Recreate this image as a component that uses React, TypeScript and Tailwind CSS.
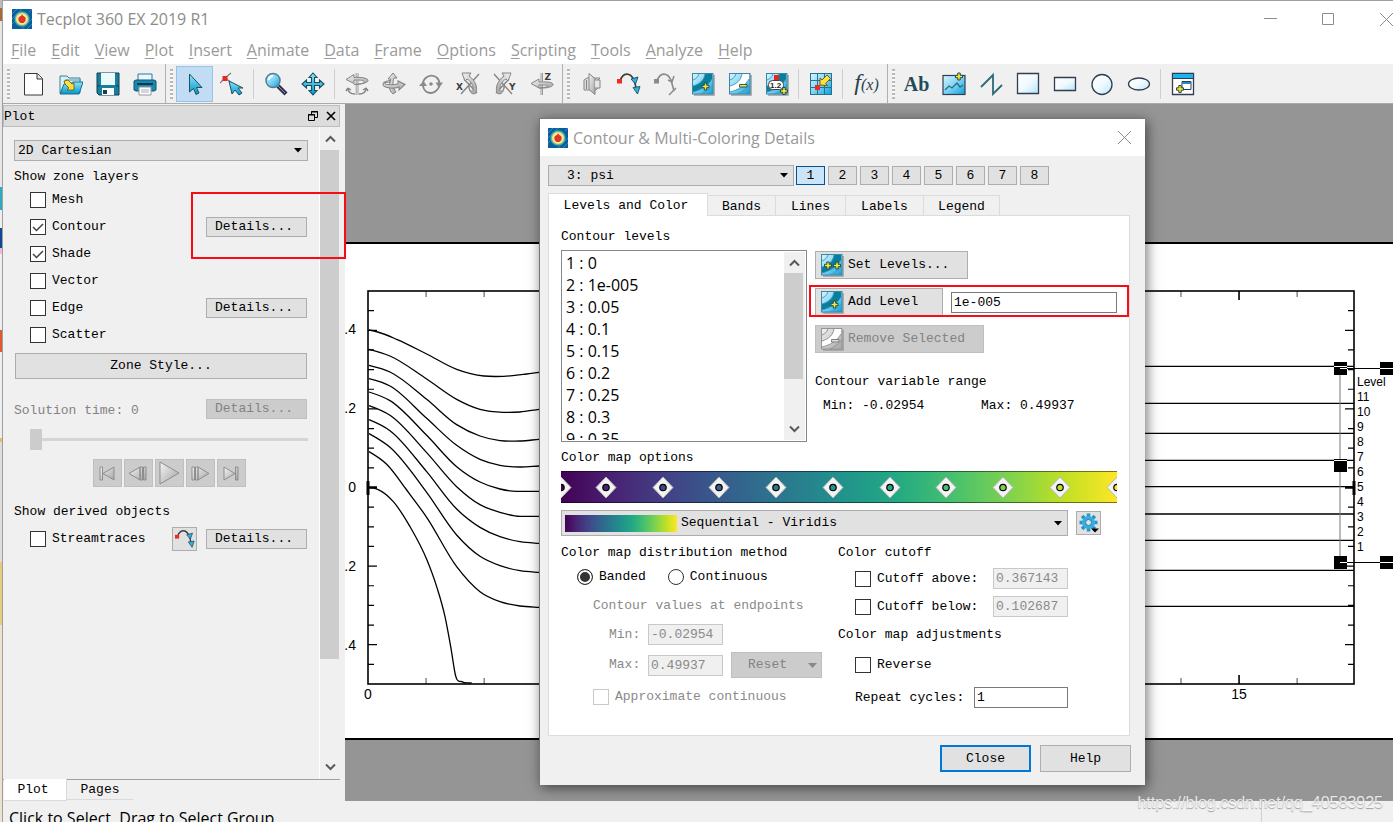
import React, { useId, useState } from "react";

type Pt = [number, number];

/* ---------- icons ---------- */

function Svg({ size = 24, children }: { size?: number; children: React.ReactNode }) {
  return (
    <svg width={size} height={size} viewBox="0 0 24 24" fill="none" aria-hidden="true" className="shrink-0">
      {children}
    </svg>
  );
}

function Defs() {
  return (
    <svg width="0" height="0" className="absolute" aria-hidden="true">
      <defs>
        <linearGradient id="cyan" x1="0" y1="0" x2="1" y2="1">
          <stop offset="0" stopColor="#d9f5ff" />
          <stop offset="0.5" stopColor="#7fd3f5" />
          <stop offset="1" stopColor="#0a9fd8" />
        </linearGradient>
        <linearGradient id="pale" x1="0" y1="0" x2="1" y2="1">
          <stop offset="0" stopColor="#ffffff" />
          <stop offset="0.5" stopColor="#f1faff" />
          <stop offset="1" stopColor="#b4e6fa" />
        </linearGradient>
        <linearGradient id="teal" x1="0" y1="0" x2="0" y2="1">
          <stop offset="0" stopColor="#8fe6fb" />
          <stop offset="1" stopColor="#0096c8" />
        </linearGradient>
        <linearGradient id="metal" x1="0" y1="0" x2="1" y2="1">
          <stop offset="0" stopColor="#f4f4f4" />
          <stop offset="1" stopColor="#a4a4a4" />
        </linearGradient>
        <radialGradient id="logo">
          <stop offset="0" stopColor="#d8261c" />
          <stop offset="0.38" stopColor="#ee5a2c" />
          <stop offset="0.48" stopColor="#fff6b0" />
          <stop offset="0.68" stopColor="#f3e27a" />
          <stop offset="0.82" stopColor="#57bda0" />
          <stop offset="1" stopColor="#1173b0" />
        </radialGradient>
      </defs>
    </svg>
  );
}

const Plus = ({ x, y }: { x: number; y: number }) => (
  <path d={`M${x - 1.2} ${y - 3.5}h2.400v2.300h2.300v2.400h-2.300v2.300h-2.400v-2.300h-2.300v-2.400h2.300z`} fill="#ffe826" stroke="#1d4c55" strokeWidth="1" />
);

const Logo = () => (
  <svg width="20" height="20" viewBox="0 0 20 20" aria-hidden="true">
    <rect width="20" height="20" fill="#0d5c9c" />
    <path d="M0 5l5-5M0 10l10-10M10 20l10-10M15 20l5-5M0 15l3-3M17 3l3-3" stroke="#2d8dc8" />
    <circle cx="10" cy="10" r="8" fill="url(#logo)" />
    <path d="M10 5l1.500 2.500 2 1V12l-2 2h-3l-2-2V8.500l2.500-1z" fill="#e0352a" />
  </svg>
);

const NewIcon = () => (
  <Svg><path d="M2.500 1.500h13l5 5V23h-18z" fill="#fff" stroke="#383838" /><path d="M15 1.500v5.500h5.500" fill="#e4e4e4" stroke="#383838" /></Svg>
);
const OpenIcon = () => (
  <Svg>
    <path d="M1 4h7l2 2h11v15H1z" fill="#d5f2f8" stroke="#3a7f90" />
    <path d="M6 8h16" stroke="#4d98a8" />
    <path d="M1 22L5 12h6l3-2h10l-4 12z" fill="url(#teal)" stroke="#146d90" />
    <path d="M5 9l4-1 4 4 2-1v7H8l2-2-4-4z" fill="#ffdf3d" stroke="#5e5115" strokeWidth=".8" />
  </Svg>
);
const SaveIcon = () => (
  <Svg>
    <path d="M1 1h22v22H3l-2-2z" fill="#167f9c" stroke="#0d3f50" />
    <path d="M5 1h14v12H5z" fill="#ecf9fc" />
    <path d="M6 16h12v7H6z" fill="#fff" /><path d="M7 18h4v4H7z" fill="#12414f" />
    <path d="M1 14h3M20 14h3" stroke="#0d3f50" />
  </Svg>
);
const PrintIcon = () => (
  <Svg>
    <path d="M5 2h14v8H5z" fill="#e8f7fd" stroke="#2b7c98" />
    <path d="M1 9l2-1h18l2 1v9l-2 1H3l-2-1z" fill="#1d86ad" stroke="#0c5877" />
    <path d="M4 12h16" stroke="#083a50" strokeWidth="2" />
    <path d="M6 15h12v8H6z" fill="#fff" stroke="#8c9aa0" />
    <path d="M8 18h8M8 20h8" stroke="#aab" />
  </Svg>
);
const ArrowIcon = () => (
  <Svg><path d="M6.500 2v18l4-3.500 2.500 6 3-1.500-2.500-5.500h5.500z" fill="url(#teal)" stroke="#205060" strokeLinejoin="round" /></Svg>
);
const AdjustIcon = () => (
  <Svg>
    <path d="M0 11l5-5M5 6l6-5M5 6l7 5" stroke="#6a7d80" strokeWidth="1.100" />
    <path d="M2.500 4h5v5h-5z" fill="#e8281e" />
    <path d="M9 9l3 13 3-4 4 5 3-2-4-5h5z" fill="url(#teal)" stroke="#205060" strokeLinejoin="round" />
  </Svg>
);
const ZoomIcon = () => (
  <Svg>
    <path d="M14 14l8 8" stroke="#31324f" strokeWidth="4.500" />
    <path d="M14 14l7 7" stroke="#8f8fa8" strokeWidth="1" />
    <circle cx="9" cy="8.500" r="7" fill="url(#cyan)" stroke="#4f7f92" strokeWidth="1.500" />
    <path d="M5 8a4 4 0 014-4" stroke="#fff" strokeWidth="2" />
  </Svg>
);
const MoveIcon = () => (
  <Svg>
    <path d="M12 1l4 4.500h-2.500v5h5V8L23 12l-4.500 4v-2.500h-5v5H16L12 23l-4-4.500h2.500v-5h-5V16L1 12l4.500-4v2.500h5v-5H8z" fill="url(#teal)" stroke="#164f60" strokeWidth="1.100" />
  </Svg>
);

function RotateIcon({ kind }: { kind: "ball" | "tilt" | "twist" | "x" | "y" | "z" }) {
  const s = { stroke: "#858585", strokeWidth: 1.4 };
  const letter = "fill-[#3c3c3c] font-['DejaVu_Sans'] text-[9px] font-bold";
  if (kind === "ball")
    return (
      <Svg>
        <path d="M11.200 1v22M13 1v22" {...s} strokeWidth=".8" />
        <path d="M1 7.500l8-5v3c7-.5 13 .5 14 2.500s-5 4.500-14 4.500c7-.5 11-1.500 10-3s-5-1.500-10-1.500v3.500z" fill="url(#metal)" {...s} strokeWidth="1" />
        <path d="M3 16c0 4 3 6 7 6M3 16l-2 3M3 16l3 2M21 16c0 4-3 6-7 6M21 16l2 3M21 16l-3 2" {...s} />
      </Svg>
    );
  if (kind === "tilt")
    return (
      <Svg>
        <path d="M11 22c-4-3-5-9-2-15H6l5-6 4 5h-3c-2 5-1 10 2 14z" fill="url(#metal)" {...s} strokeWidth="1" />
        <path d="M8 8.500C3 9 0 11 1.500 13.500S13 17 17 15v3l6-5.500L16 9v3c-5 1-13 1-13-.5 0-1 3-1.500 5-1.500z" fill="url(#metal)" {...s} strokeWidth="1.100" />
      </Svg>
    );
  if (kind === "twist")
    return (
      <Svg>
        <path d="M4 13A8.500 8.500 0 0117 5M20 11A8.500 8.500 0 017 19.500" {...s} strokeWidth="1.800" />
        <path d="M17 5a8.500 8.500 0 013.500 6M7 19.500A8.500 8.500 0 014 14" {...s} strokeWidth="1.800" />
        <path d="M0 14l4.500-5L8 14zM16.500 10.500H24L20 16z" fill="#8a8a8a" />
        <circle cx="12" cy="12" r="1.800" fill="#8a8a8a" />
      </Svg>
    );
  if (kind === "z")
    return (
      <Svg>
        <path d="M11 1v22M12.500 1v22" {...s} strokeWidth=".8" />
        <path d="M1 11.500L9 7v3c6-.5 13 0 14 2s-4 4.500-14 4c8-.5 10-2 9-2.500s-5-.5-9-.5v3z" fill="url(#metal)" {...s} strokeWidth="1" />
        <text x="14.500" y="8" className={letter}>Z</text>
      </Svg>
    );
  const right = kind === "y";
  return (
    <Svg>
      <path d="M23 2L5 22M8 7l13 14" {...s} transform={right ? "translate(24 0) scale(-1 1)" : undefined} />
      <g transform={right ? "translate(24 0) scale(-1 1)" : undefined}>
        <path d="M6 1h9l-2 3c6 4 9 11 7 17-4 3-8-2-7-9-1 5 2 8 4 7 1-5-2-10-6-12l-2 2z" fill="url(#metal)" {...s} strokeWidth="1" />
      </g>
      <text x={right ? 16 : 0} y="18" className={letter}>{right ? "Y" : "X"}</text>
    </Svg>
  );
}

const SliceIcon = () => (
  <Svg>
    <path d="M4 8l3-2h13l-2 2v8l-2 2H4z" fill="#dcdcdc" stroke="#858585" />
    <path d="M9 1.500l6 5v16l-6-5z" fill="url(#metal)" stroke="#858585" />
    <path d="M15 8h5v8h-5" fill="#e6e6e6" stroke="#858585" />
    <path d="M6.500 8v9" stroke="#858585" />
  </Svg>
);
function StreamIcon({ gray = false, size = 24 }: { gray?: boolean; size?: number }) {
  return (
    <Svg size={size}>
      <path d="M3 9C6 0 13 0 17 8l3 11" stroke={gray ? "#8b8b8b" : "#3e3e3e"} strokeWidth="1.600" />
      <path d="M0 7h5v4.500H0z" fill={gray ? "#8b8b8b" : "#ee2c22"} />
      {gray ? (
        <path d="M14 8l4 2 2-6M15 23l7-7" stroke="#8b8b8b" strokeWidth="1.500" />
      ) : (
        <path d="M14 7l7-2-2.500 7zM16 15.500l7-1-2.500 7.500z" fill="#2bb2e6" stroke="#214a59" strokeWidth=".9" />
      )}
    </Svg>
  );
}

function ContourIcon({ mark, gray = false }: { mark: "plus" | "plus2" | "minus" | "label"; gray?: boolean }) {
  const line = gray ? "#8e8e8e" : "#4394b5";
  const band = mark === "minus" ? "#ffffff" : "#057f9d";
  return (
    <Svg>
      <path d="M3 23h20V3" stroke="#9a9a9a" strokeWidth="1.500" />
      <rect x="1.500" y="1.500" width="20.500" height="20.500" fill={gray ? "url(#metal)" : "url(#cyan)"} stroke={gray ? "#959595" : "#3c87a6"} />
      <path d="M14 2h7v5C17 14 10 18 2 20v-6C9 12 13 8 14 2z" fill={band} />
      <path d="M14 2C13 8 9 12 2 14M8 2C7 5 5 7 2 8M21 7C17 14 10 18 2 20M22 13c-3 4-7 7-12 9" stroke={line} strokeWidth=".9" />
      {mark === "plus" && <Plus x={14.5} y={14.5} />}
      {mark === "plus2" && (<><Plus x={8} y={12.5} /><Plus x={17} y={12.5} /></>)}
      {mark === "minus" && <path d="M11.500 12.500h7.500v2.500h-7.500z" fill={gray ? "#ddd" : "#ffe826"} stroke={gray ? "#777" : "#1d4c55"} strokeWidth=".9" />}
      {mark === "label" && (
        <>
          <path d="M9 3h5v5H9z" fill="#e0281c" />
          <rect x="3.500" y="8.500" width="15" height="9" rx="4" fill="#fff" stroke="#37474f" />
          <text x="5" y="16" className="fill-[#222] font-['Liberation_Sans'] text-[8px] font-bold">1.2</text>
          <Plus x={19} y={19} />
        </>
      )}
    </Svg>
  );
}
const ProbeIcon = () => (
  <Svg>
    <rect x="1.500" y="1.500" width="21" height="21" fill="url(#cyan)" stroke="#24728f" />
    <path d="M8.500 2v20M15.500 2v20M2 8.500h20M2 15.500h20" stroke="#24728f" />
    <path d="M6 13h5v5H6z" fill="#ee2c22" />
    <path d="M11 13V6l2 2 5-5 3.500 3.500-5 5 2 2z" fill="#ffe23a" stroke="#5e5115" strokeWidth=".9" />
  </Svg>
);
const PictureIcon = () => (
  <Svg>
    <rect x="1" y="3.500" width="22" height="19" fill="url(#cyan)" stroke="#343c50" strokeWidth="1.200" />
    <path d="M3 18l4-4 3 2 5-5 3 4 3-2" stroke="#2c6d83" strokeWidth="1.300" />
    <Plus x={17} y={4.5} />
  </Svg>
);
const PolylineIcon = () => (
  <Svg><path d="M2 15L14 3v19l9-9" stroke="#2b6a78" strokeWidth="1.800" /></Svg>
);
const GeomIcon = ({ kind }: { kind: "square" | "rect" | "circle" | "ellipse" }) => (
  <Svg>
    {kind === "square" && <path d="M1.500 1.500h21v20h-21z" fill="url(#pale)" stroke="#343c50" strokeWidth="1.300" />}
    {kind === "rect" && <path d="M1.500 5.500h21v13h-21z" fill="url(#pale)" stroke="#343c50" strokeWidth="1.300" />}
    {kind === "circle" && <circle cx="12" cy="12.500" r="10" fill="url(#pale)" stroke="#343c50" strokeWidth="1.300" />}
    {kind === "ellipse" && <ellipse cx="12" cy="12" rx="10.500" ry="6" fill="url(#pale)" stroke="#343c50" strokeWidth="1.300" />}
  </Svg>
);
const FrameIcon = () => (
  <Svg>
    <path d="M1.500 1.500h21v21h-21z" fill="#fff" stroke="#343c50" strokeWidth="1.300" />
    <path d="M2 2h20v4H2z" fill="#1cb2ec" /><path d="M2 6.500h20" stroke="#343c50" />
    <path d="M11 9.500h9v8h-9z" fill="#fff" stroke="#343c50" /><path d="M11 10h9v2h-9z" fill="#1c8fc0" />
    <Plus x={9} y={17} />
  </Svg>
);

/* ---------- small controls ---------- */

const mono = "font-['Liberation_Mono',monospace] text-[13px] leading-4";
const ui = "font-['Open_Sans','Noto_Sans',sans-serif]";

function Check({ label, checked = false, disabled = false }: { label: string; checked?: boolean; disabled?: boolean }) {
  const [on, setOn] = useState(checked);
  return (
    <label className={`flex items-center gap-1.5 ${disabled ? "text-[#8a8a8a]" : ""}`}>
      <span className="grid">
        <input
          type="checkbox"
          checked={on}
          disabled={disabled}
          onChange={(e) => setOn(e.target.checked)}
          className="col-start-1 row-start-1 size-4 appearance-none border border-[#333] bg-white disabled:border-[#c8c8c8]"
        />
        {on && (
          <svg viewBox="0 0 16 16" className="pointer-events-none col-start-1 row-start-1 size-4" fill="none" stroke="#444" strokeWidth="1.500">
            <path d="M3 8l3.500 3.500L13 5" />
          </svg>
        )}
      </span>
      {label}
    </label>
  );
}

function Btn({ children, className = "", disabled = false }: { children: React.ReactNode; className?: string; disabled?: boolean }) {
  return (
    <button
      type="button"
      disabled={disabled}
      className={`flex items-center border border-[#adadad] bg-[#e1e1e1] disabled:border-[#bfbfbf] disabled:bg-[#cccccc] disabled:text-[#838383] ${className}`}
    >
      {children}
    </button>
  );
}

const Details = ({ disabled = false }: { disabled?: boolean }) => (
  <Btn disabled={disabled} className="h-5 w-[101px] pl-2">Details...</Btn>
);

function Select({ label, value, className = "", pad = "pl-[3px]" }: { label: string; value: string; className?: string; pad?: string }) {
  return (
    <span className={`grid items-center ${className}`}>
      <select aria-label={label} className={`col-start-1 row-start-1 h-full w-full appearance-none border border-[#adadad] bg-[#e1e1e1] ${pad}`}>
        <option>{value}</option>
      </select>
      <svg width="8" height="5" className="pointer-events-none col-start-1 row-start-1 mr-1.5 justify-self-end"><path d="M0 0h8L4 4.500z" /></svg>
    </span>
  );
}

function Field({ label, value, disabled = false, className }: { label: string; value: string; disabled?: boolean; className: string }) {
  return (
    <input
      aria-label={label}
      defaultValue={value}
      disabled={disabled}
      className={`h-[21px] border border-[#7a7a7a] bg-white px-0.5 disabled:border-[#c8c8c8] disabled:bg-[#f0f0f0] disabled:text-[#8a8a8a] ${className}`}
    />
  );
}

const Chevron = ({ down = false }: { down?: boolean }) => (
  <svg width="11" height="8" viewBox="0 0 11 8" fill="none" stroke="#5a5a5a" strokeWidth="2" aria-hidden="true">
    <path d={down ? "M1 1.500l4.500 4.500L10 1.500" : "M1 6.500L5.500 2 10 6.500"} />
  </svg>
);

/* ---------- top bars ---------- */

const menus = ["File", "Edit", "View", "Plot", "Insert", "Animate", "Data", "Frame", "Options", "Scripting", "Tools", "Analyze", "Help"];

function Tool({ label, children, active = false }: { label: string; children: React.ReactNode; active?: boolean }) {
  return (
    <button
      type="button"
      aria-label={label}
      className={`flex h-9 w-[37px] shrink-0 items-center justify-center ${active ? "border border-[#90c3f0] bg-[#c1dcf3]" : ""}`}
    >
      {children}
    </button>
  );
}
const Sep = () => <div className="mx-[3px] h-[30px] w-px shrink-0 bg-[#cfcfcf]" />;
const Grip = () => <div className="h-[30px] w-[3px] shrink-0 bg-[repeating-linear-gradient(to_bottom,#b8b8b8_0px,#b8b8b8_2px,#f8f8f8_2px,#f8f8f8_4px)]" />;
const Split = () => (
  <div className="flex w-[13px] shrink-0 items-center gap-1 self-stretch pl-0.5">
    <div className="w-px self-stretch bg-[#b0b0b0]" />
    <Grip />
  </div>
);

function TopBars() {
  return (
    <header className={`shrink-0 bg-white ${ui}`}>
      <div className="flex h-9 items-center pl-[9px] text-[#8c8c8c]">
        <Logo />
        <h1 className="ml-[5px] flex-1 text-[16px]">Tecplot 360 EX 2019 R1</h1>
        <div className="flex gap-[45px]">
          <button type="button" aria-label="Minimize"><svg width="13" height="13"><path d="M0 5.500h13" stroke="#8c8c8c" /></svg></button>
          <button type="button" aria-label="Maximize"><svg width="13" height="13"><path d="M.5.500h11v11H.500z" fill="none" stroke="#8c8c8c" /></svg></button>
          <button type="button" aria-label="Close window"><svg width="13" height="13"><path d="M0 0l13 13M13 0L0 13" stroke="#8c8c8c" /></svg></button>
        </div>
      </div>
      <nav className="flex h-[27px] gap-[15px] pl-2 text-[16px] leading-6 text-[#9a9a9a]">
        {menus.map((m) => (
          <button type="button" key={m} className="-mt-0.5"><span className="underline underline-offset-2">{m[0]}</span>{m.slice(1)}</button>
        ))}
      </nav>
      <div className="flex h-10 items-center overflow-hidden border-b border-[#ababab] bg-[#f0f0f0] pl-1">
        <Grip />
        <div className="ml-[5px] flex">
          <Tool label="New"><NewIcon /></Tool>
          <Tool label="Open"><OpenIcon /></Tool>
          <Tool label="Save"><SaveIcon /></Tool>
          <Tool label="Print"><PrintIcon /></Tool>
        </div>
        <Split />
        <Tool label="Select" active><ArrowIcon /></Tool>
        <Tool label="Adjust"><AdjustIcon /></Tool>
        <Sep />
        <Tool label="Zoom"><ZoomIcon /></Tool>
        <Tool label="Translate"><MoveIcon /></Tool>
        <Sep />
        <Tool label="Rotate rollerball"><RotateIcon kind="ball" /></Tool>
        <Tool label="Rotate spherical"><RotateIcon kind="tilt" /></Tool>
        <Tool label="Rotate twist"><RotateIcon kind="twist" /></Tool>
        <Tool label="Rotate X"><RotateIcon kind="x" /></Tool>
        <Tool label="Rotate Y"><RotateIcon kind="y" /></Tool>
        <Tool label="Rotate Z"><RotateIcon kind="z" /></Tool>
        <Split />
        <Tool label="Slice"><SliceIcon /></Tool>
        <Tool label="Streamtrace"><StreamIcon /></Tool>
        <Tool label="Streamtrace termination"><StreamIcon gray /></Tool>
        <Tool label="Add contour level"><ContourIcon mark="plus" /></Tool>
        <Tool label="Remove contour level"><ContourIcon mark="minus" /></Tool>
        <Tool label="Add contour label"><ContourIcon mark="label" /></Tool>
        <Sep />
        <Tool label="Probe"><ProbeIcon /></Tool>
        <Sep />
        <div className="pl-0.5">
          <Tool label="Equations"><span className="font-['Liberation_Serif',serif] text-2xl leading-6 italic text-[#24454c]">f<span className="text-base">(x)</span></span></Tool>
        </div>
        <Split />
        <Tool label="Add text"><span className="font-['Liberation_Serif',serif] text-xl font-bold text-[#1f4c58]">Ab</span></Tool>
        <Tool label="Add image"><PictureIcon /></Tool>
        <Tool label="Polyline"><PolylineIcon /></Tool>
        <Tool label="Square"><GeomIcon kind="square" /></Tool>
        <Tool label="Rectangle"><GeomIcon kind="rect" /></Tool>
        <Tool label="Circle"><GeomIcon kind="circle" /></Tool>
        <Tool label="Ellipse"><GeomIcon kind="ellipse" /></Tool>
        <Sep />
        <Tool label="New frame"><FrameIcon /></Tool>
      </div>
    </header>
  );
}

/* ---------- sidebar ---------- */

const layers = [
  { name: "Mesh" },
  { name: "Contour", on: true, details: true },
  { name: "Shade", on: true },
  { name: "Vector" },
  { name: "Edge", details: true },
  { name: "Scatter" },
];

const playback: [string, string][] = [
  ["First", "M5 6h2.500v13H5zM19 6v13L8 12.500z"],
  ["Step back", "M3 12.500l11-6.500v13zM14 6h2.500v13H14zM17.500 6H20v13h-2.500z"],
  ["Play", "M3 1l19 11L3 23z"],
  ["Step forward", "M4 6h2.500v13H4zM7.500 6H10v13H7.500zM21 12.500L10 6v13z"],
  ["Last", "M5 6v13l11-6.500zM16.500 6H19v13h-2.500z"],
];

function Sidebar() {
  return (
    <aside className={`relative flex w-[342px] shrink-0 flex-col bg-[#f0f0f0] pt-px pr-[5px] ${mono}`}>
      <div className="flex h-[22px] items-center justify-between border border-[#bdbdbd] bg-[#dcdcdc] pr-px">
        <h2 className="pt-0.5">Plot</h2>
        <div className="flex gap-1">
          <button type="button" aria-label="Float panel">
            <svg width="14" height="14" fill="none" stroke="#000"><path d="M5.500 5.500v-3h6v6h-3M5 3h7M2.500 5.500h6v6h-6zM2 6h7" /></svg>
          </button>
          <button type="button" aria-label="Close panel">
            <svg width="14" height="14" stroke="#000" strokeWidth="1.600"><path d="M3 3l8 8M11 3l-8 8" /></svg>
          </button>
        </div>
      </div>
      <div className="flex min-h-0 flex-1 border-b border-[#a0a0a0]">
        <div className="flex min-w-0 flex-1 flex-col pt-[13px] pr-[11px] pl-[11px]">
          <Select label="Plot type" value="2D Cartesian" className="h-[21px]" />
          <h3 className="pt-2">Show zone layers</h3>
          <ul className="pt-px pr-px">
            {layers.map((l) => (
              <li key={l.name} className="flex h-[27px] items-center justify-between pl-4">
                <Check label={l.name} checked={l.on} />
                {l.details && <Details />}
              </li>
            ))}
          </ul>
          <Btn className="mt-[5px] mr-px ml-px h-[26px] justify-center">Zone Style...</Btn>
          <div className="mt-5 mr-px flex items-center justify-between text-[#838383]">
            <span className="pt-1">Solution time: 0</span>
            <Details disabled />
          </div>
          <input
            type="range"
            aria-label="Solution time"
            disabled
            defaultValue={0}
            className="mt-2.5 ml-4 h-[21px] appearance-none bg-[linear-gradient(#d2d6d6,#d2d6d6)] bg-[length:100%_3px] bg-center bg-no-repeat [&::-webkit-slider-thumb]:h-[21px] [&::-webkit-slider-thumb]:w-3 [&::-webkit-slider-thumb]:appearance-none [&::-webkit-slider-thumb]:bg-[#cccccc]"
          />
          <div className="mt-[9px] flex justify-center gap-0.5 pl-4">
            {playback.map(([name, d]) => (
              <button key={name} type="button" disabled aria-label={name} className="flex h-7 w-[29px] items-center justify-center border border-[#bfbfbf] bg-[#cccccc]">
                <Svg><path d={d} fill="url(#metal)" stroke="#8d8d8d" /></Svg>
              </button>
            ))}
          </div>
          <h3 className="mt-[17px]">Show derived objects</h3>
          <div className="mt-[7px] mr-px flex items-center pl-4">
            <Check label="Streamtraces" />
            <Btn className="mr-[9px] ml-auto h-6 w-[25px] justify-center"><StreamIcon size={20} /></Btn>
            <Details />
          </div>
        </div>
        <div className="flex w-[21px] flex-col items-center border-l border-white">
          <div className="flex h-[23px] items-center"><Chevron /></div>
          <div className="h-[78%] w-[19px] self-start bg-[#cdcdcd]" />
          <div className="mt-auto mb-2"><Chevron down /></div>
        </div>
      </div>
      <div role="tablist" className="-mt-px flex items-start">
        <button type="button" role="tab" aria-selected="true" className="ml-px h-[22px] w-[63px] border-r border-b border-[#dadada] bg-white pr-1">Plot</button>
        <button type="button" role="tab" aria-selected="false" className="mt-px h-5 w-[66px] border-b border-[#dadada]">Pages</button>
      </div>
      <div className="pointer-events-none absolute top-[88px] left-[188px] h-[67px] w-[155px] border-2 border-[#fa0a14]" />
    </aside>
  );
}

/* ---------- contour plot ---------- */

const curves: Pt[][] = [
  [[87, 150], [113, 156], [170, 178], [260, 222], [350, 268], [432, 288], [490, 289], [560, 282], [597, 277], [900, 259], [3042, 259]],
  [[87, 208], [150, 228], [260, 297], [350, 358], [420, 388], [490, 397], [540, 396], [597, 388], [900, 370], [3042, 370]],
  [[87, 256], [150, 276], [260, 358], [350, 434], [420, 468], [480, 482], [540, 483], [597, 478], [900, 460], [3042, 460]],
  [[87, 296], [150, 318], [260, 415], [350, 496], [420, 538], [480, 556], [540, 561], [597, 558], [900, 541], [3042, 541]],
  [[87, 336], [150, 362], [260, 466], [350, 560], [420, 606], [480, 627], [530, 634], [597, 634], [900, 620], [3042, 620]],
  [[87, 377], [150, 406], [260, 518], [350, 620], [420, 674], [480, 697], [540, 709], [597, 709], [900, 702], [3042, 702]],
  [[87, 419], [150, 452], [260, 575], [350, 687], [420, 742], [480, 770], [540, 785], [597, 790], [900, 781], [3042, 781]],
  [[87, 461], [150, 502], [260, 637], [350, 765], [420, 829], [480, 857], [540, 872], [597, 877], [900, 871], [3042, 871]],
  [[87, 515], [140, 553], [200, 630], [260, 712], [350, 860], [420, 935], [480, 965], [540, 978], [597, 982], [900, 979], [3042, 979]],
  [[87, 622], [113, 628], [160, 665], [210, 740], [260, 838], [290, 920], [315, 1010], [333, 1105], [347, 1188], [365, 1205], [395, 1209]],
];

/* Cubic path through the points, with parabola slopes for uneven spacing and none where a flat run starts. */
function smooth(p: Pt[]) {
  const n = p.length;
  const w = (i: number) => p[i + 1][0] - p[i][0];
  const s = (i: number) => (p[i + 1][1] - p[i][1]) / w(i);
  const inner = (i: number) => (s(i) === 0 ? 0 : (s(i - 1) * w(i) + s(i) * w(i - 1)) / (w(i) + w(i - 1)));
  const slope = (i: number) => (i === 0 ? (3 * s(0) - inner(1)) / 2 : i === n - 1 ? s(n - 2) : inner(i));
  let d = `M${p[0][0]} ${p[0][1]}`;
  for (let i = 0; i < n - 1; i++) {
    const t = w(i) / 3;
    d += `C${p[i][0] + t} ${p[i][1] + slope(i) * t} ${p[i + 1][0] - t} ${p[i + 1][1] - slope(i + 1) * t} ${p[i + 1][0]} ${p[i + 1][1]}`;
  }
  return d;
}

function PlotDrawing() {
  const left = 23, right = 1009, top = 47, bottom = 440;
  const yTicks = Array.from({ length: 19 }, (_, i) => i + 1);
  const xTicks = Array.from({ length: 16 }, (_, i) => i + 1);
  const text = "fill-black font-['Liberation_Sans'] text-[14px]";
  const levels = ["Level", "11", "10", "9", "8", "7", "6", "5", "4", "3", "2", "1"];
  return (
    <svg className="block h-[494px] w-full" role="img" aria-label="Streamfunction contour plot">
      <rect x={left} y={top} width={right - left} height={bottom - top} fill="none" stroke="#000" strokeWidth="1.600" />
      <g stroke="#000" strokeWidth="1.200">
        {yTicks.map((i) => {
          const y = top + i * 19.65, n = i % 4 === 2 ? 9 : 6;
          return <path key={i} d={`M${left} ${y}h${n}M${right} ${y}h${-n}`} strokeWidth={i === 10 ? 2.5 : 1.2} />;
        })}
        {xTicks.map((i) => {
          const x = left + i * 58.07, n = i % 5 ? 6 : 9;
          return <path key={i} d={`M${x} ${top}v${n}M${x} ${bottom}v${-n}`} strokeWidth={i % 5 ? 0.7 : 1.6} />;
        })}
        <path d={`M${left} 237v14M${right} 237v14`} strokeWidth="3" />
      </g>
      <g transform="translate(-5 36) scale(0.33333)" fill="none" stroke="#000">
        {curves.map((c, i) => <path key={i} d={smooth(c)} vectorEffect="non-scaling-stroke" strokeWidth="1.300" />)}
      </g>
      <g className={text} textAnchor="end">
        {[".4", ".2", "0", ".2", ".4"].map((t, i) => <text key={i} x="11" y={90 + i * 79}>{t}</text>)}
      </g>
      <g className={text} textAnchor="middle">
        <text x="23" y="455">0</text>
        <text x="894" y="455">15</text>
      </g>
      <path d="M995 124v194" stroke="#777" />
      <path d="M995 124.500h60M995 318.500h60" stroke="#000" />
      <g fill="#000">
        {[118, 215, 312].map((y) => <rect key={y} x="989" y={y} width="13" height="13" />)}
        {[118, 312].map((y) => <rect key={y} x="1035" y={y} width="13" height="13" />)}
      </g>
      <path d="M989 122.500h13M995 124.500h7M1035 124.500h13M995 318.500h7M1035 318.500h13M989 216.500h13" stroke="#fff" />
      <g className="fill-black font-['Liberation_Sans'] text-[12px]">
        {levels.map((t, i) => <text key={t} x="1012" y={142 + i * 15}>{t}</text>)}
      </g>
    </svg>
  );
}

/* ---------- dialog ---------- */

const levelList = ["0", "1e-005", "0.05", "0.1", "0.15", "0.2", "0.25", "0.3", "0.35"];
const stops = ["#440154", "#482475", "#414487", "#355f8d", "#2a788e", "#21918c", "#22a884", "#44bf70", "#7ad151", "#bddf26", "#fde725"];
const knots = [0, 45, 102, 158, 215, 272, 329, 385, 442, 499, 556];
const viridis = "bg-[linear-gradient(to_right,#440154,#482475,#414487,#355f8d,#2a788e,#21918c,#22a884,#44bf70,#7ad151,#bddf26,#fde725)]";

function ColorBar() {
  return (
    <div className={`flex h-8 items-center border-y border-black/50 ${viridis}`}>
      <svg viewBox="0 0 556 30" className="w-full" aria-hidden="true">
        {knots.map((x, i) => (
          <g key={x}>
            <path d={`M${x} 5l10 10.500-10 10.500-10-10.500z`} fill="#f3f3f3" stroke="#b5b5b5" />
            <circle cx={x} cy="15.500" r="3.200" fill={stops[i]} stroke="#000" strokeWidth="1.200" />
          </g>
        ))}
      </svg>
    </div>
  );
}

const GearIcon = () => (
  <svg width="22" height="22" viewBox="0 0 22 22" aria-hidden="true" className="shrink-0">
    <g stroke="#2595cb" strokeWidth="3.500">
      <path d="M10.500 1.500v18M1.500 10.500h18M4.100 4.100l12.800 12.800M16.900 4.100L4.100 16.900" />
    </g>
    <circle cx="10.500" cy="10.500" r="6.500" fill="#38aee0" />
    <circle cx="10.500" cy="10.500" r="3" fill="#e1e1e1" stroke="#1a7eae" />
    <path d="M13 16.500h8l-4 4z" fill="#000" />
  </svg>
);

function Radio({ label, on = false, group }: { label: string; on?: boolean; group: string }) {
  return (
    <label className="flex items-center gap-1.5">
      <input
        type="radio"
        name={group}
        defaultChecked={on}
        className="size-4 appearance-none rounded-full border border-[#333] bg-white checked:bg-[#333] checked:shadow-[inset_0_0_0_2px_white]"
      />
      {label}
    </label>
  );
}

const dialogTabs: [string, string][] = [
  ["Levels and Color", "h-[23px] w-[160px] border-x bg-white pr-1 pt-0.5"],
  ["Bands", "h-5 w-[68px] border-r bg-[#f0f0f0] pt-0.5"],
  ["Lines", "h-5 w-[70px] border-r bg-[#f0f0f0] pt-0.5"],
  ["Labels", "h-5 w-[78px] border-r bg-[#f0f0f0] pt-0.5"],
  ["Legend", "h-5 w-[76px] border-r bg-[#f0f0f0] pt-0.5"],
];

function ContourDialog() {
  const group = useId();
  return (
    <section role="dialog" aria-label="Contour & Multi-Coloring Details" className="absolute top-[118px] left-[539px] w-[606px] border-t border-l border-[#777] bg-[#f0f0f0] shadow-[2px_3px_12px_rgba(0,0,0,0.55)]">
      <header className={`flex h-[37px] items-center bg-white pr-3.5 pl-2 text-[#999] ${ui}`}>
        <Logo />
        <h2 className="ml-[5px] flex-1 text-[16px]">Contour &amp; Multi-Coloring Details</h2>
        <button type="button" aria-label="Close dialog"><svg width="13" height="13"><path d="M0 0l13 13M13 0L0 13" stroke="#8c8c8c" /></svg></button>
      </header>
      <div className={`px-2 pt-[9px] pb-[13px] ${mono}`}>
        <div className="flex items-center gap-[3px]">
          <Select label="Contour variable" value="3: psi" pad="pl-[18px]" className="mr-[-1px] h-[21px] w-[246px]" />
          {[1, 2, 3, 4, 5, 6, 7, 8].map((n) => (
            <button key={n} type="button" className={`h-[19px] w-[29px] border ${n === 1 ? "border-[#005499] bg-[#cce4f7]" : "border-[#adadad] bg-[#e1e1e1]"}`}>{n}</button>
          ))}
        </div>
        <div role="tablist" className="mt-[7px] flex items-end">
          {dialogTabs.map(([t, cls], i) => (
            <button key={t} type="button" role="tab" aria-selected={i === 0} className={`border-t border-[#dcdcdc] ${i === 0 ? "relative -mb-px" : ""} ${cls}`}>{t}</button>
          ))}
        </div>
        <div className="mr-[7px] border border-[#dcdcdc] bg-white pt-[13px] pr-3 pb-[27px] pl-3">
          <div className="flex gap-2">
            <div className="w-[246px]">
              <h3>Contour levels</h3>
              <div className="mt-[5px] flex h-[192px] border border-[#828790] p-px">
                <ul role="listbox" aria-label="Contour levels" className={`flex-1 overflow-hidden pl-[3px] text-[16px] leading-[22px] ${ui}`}>
                  {levelList.map((v, i) => <li key={v} role="option" aria-selected="false">{i + 1} : {v}</li>)}
                </ul>
                <div className="flex w-[21px] flex-col items-center bg-[#f0f0f0]">
                  <div className="flex h-[21px] items-center"><Chevron /></div>
                  <div className="h-[106px] w-[19px] self-start bg-[#cdcdcd]" />
                  <div className="mt-auto mb-[7px]"><Chevron down /></div>
                </div>
              </div>
            </div>
            <div className="flex flex-1 flex-col items-start pt-[22px]">
              <Btn className="h-7 w-[153px] gap-1 pl-1"><ContourIcon mark="plus2" />Set Levels...</Btn>
              <div className="relative mt-[9px] flex items-center gap-2">
                <Btn className="h-7 w-32 gap-1 pl-1"><ContourIcon mark="plus" />Add Level</Btn>
                <Field label="New level" value="1e-005" className="w-[166px]" />
                <div className="pointer-events-none absolute -top-[3px] -left-1.5 h-8 w-80 border-2 border-[#fa0a14]" />
              </div>
              <Btn disabled className="mt-[9px] h-7 w-[169px] gap-1 pl-1"><ContourIcon mark="minus" gray />Remove Selected</Btn>
              <h3 className="mt-[21px]">Contour variable range</h3>
              <div className="mt-2 flex w-full pl-2">
                <span className="w-[158px]">Min: -0.02954</span>
                <span>Max: 0.49937</span>
              </div>
            </div>
          </div>
          <h3 className="mt-2 mb-[5px]">Color map options</h3>
          <ColorBar />
          <div className="mt-[7px] flex items-center gap-2">
            <span className="grid h-[26px] w-[507px] items-center">
              <Select label="Color map" value="Sequential - Viridis" pad="pl-[119px]" className="col-start-1 row-start-1 h-[26px]" />
              <span className={`pointer-events-none col-start-1 row-start-1 ml-1 h-[17px] w-28 ${viridis}`} />
            </span>
            <Btn className="h-6 w-[25px] justify-center"><GearIcon /></Btn>
          </div>
          <div className="mt-[9px] flex">
            <div className="w-[277px]">
              <h3>Color map distribution method</h3>
              <div className="mt-2 flex gap-[22px] pl-4">
                <Radio group={group} label="Banded" on />
                <Radio group={group} label="Continuous" />
              </div>
              <div className="pl-8 text-[#8a8a8a]">
                <h4 className="mt-[13px]">Contour values at endpoints</h4>
                <div className="mt-2.5 flex items-center pl-4">
                  <span className="w-[39px]">Min:</span>
                  <Field label="Endpoint minimum" value="-0.02954" disabled className="w-[75px]" />
                </div>
                <div className="mt-[7px] flex items-center pl-4">
                  <span className="w-[39px]">Max:</span>
                  <Field label="Endpoint maximum" value="0.49937" disabled className="w-[75px]" />
                  <Btn disabled className="ml-2 h-[26px] w-[91px] justify-between pr-1 pl-4">
                    Reset
                    <svg width="9" height="5"><path d="M0 0h9L4.500 5z" fill="#888" /></svg>
                  </Btn>
                </div>
                <div className="mt-[11px]"><Check label="Approximate continuous" disabled /></div>
              </div>
            </div>
            <div className="w-[230px]">
              <h3>Color cutoff</h3>
              <div className="mt-[7px] flex items-center justify-between pl-[17px]">
                <Check label="Cutoff above:" />
                <Field label="Cutoff above value" value="0.367143" disabled className="w-[75px]" />
              </div>
              <div className="mt-[7px] flex items-center justify-between pl-[17px]">
                <Check label="Cutoff below:" />
                <Field label="Cutoff below value" value="0.102687" disabled className="w-[75px]" />
              </div>
              <h3 className="mt-2.5">Color map adjustments</h3>
              <div className="mt-3.5 pl-[17px]"><Check label="Reverse" /></div>
              <label className="mt-3.5 flex items-center justify-between pl-[17px]">
                Repeat cycles:
                <Field label="Repeat cycles" value="1" className="w-[94px]" />
              </label>
            </div>
          </div>
        </div>
        <div className="mt-[9px] mr-1.5 flex justify-end gap-[9px]">
          <button type="button" className="h-[27px] w-[91px] border-2 border-[#0078d7] bg-[#e1e1e1]">Close</button>
          <button type="button" className="h-[27px] w-[91px] border border-[#adadad] bg-[#e1e1e1]">Help</button>
        </div>
      </div>
    </section>
  );
}

export default function App() {
  return (
    <div className="relative flex h-screen overflow-hidden bg-[#f0f0f0] text-black">
      <Defs />
      <div className="w-[3px] shrink-0 border-r border-[#a0a0a0] bg-[linear-gradient(#bbb_0_8px,#a56a35_8px_21px,#e6e6e6_21px_187px,#28aec0_187px_210px,#eee_210px_228px,#0b4a90_228px_248px,#f2b8d8_248px_254px,#eee_254px_330px,#e2572f_330px_352px,#eee_352px_438px,#e2c064_438px_442px,#ddd_442px_562px,#e5cb7c_562px_625px,#e9e3cf_625px)]" />
      <div className="flex min-w-0 flex-1 flex-col border-t border-[#a0a0a0]">
        <TopBars />
        <div className="flex min-h-0 flex-1">
          <Sidebar />
          <main className="min-w-0 flex-1 bg-[#959595] pt-[138px]">
            <div className="overflow-hidden border-y-2 border-black bg-white"><PlotDrawing /></div>
          </main>
        </div>
        <footer className={`flex h-[21px] shrink-0 overflow-hidden bg-[#f0f0f0] pt-1.5 pl-1.5 text-[16px] leading-[22px] ${ui}`}>
          <span className="flex-1 whitespace-nowrap">Click to Select, Drag to Select Group</span>
          <span className="-mt-1.5 w-[132px] border-l border-[#d0d0d0]" />
        </footer>
      </div>
      <ContourDialog />
      <div className="pointer-events-none absolute right-2.5 bottom-[9px] font-['Liberation_Sans',sans-serif] text-[16px] leading-5 text-white/80 [text-shadow:0_1px_1px_rgba(120,120,120,0.7)]">
        https://blog.csdn.net/qq_40583925
      </div>
    </div>
  );
}
